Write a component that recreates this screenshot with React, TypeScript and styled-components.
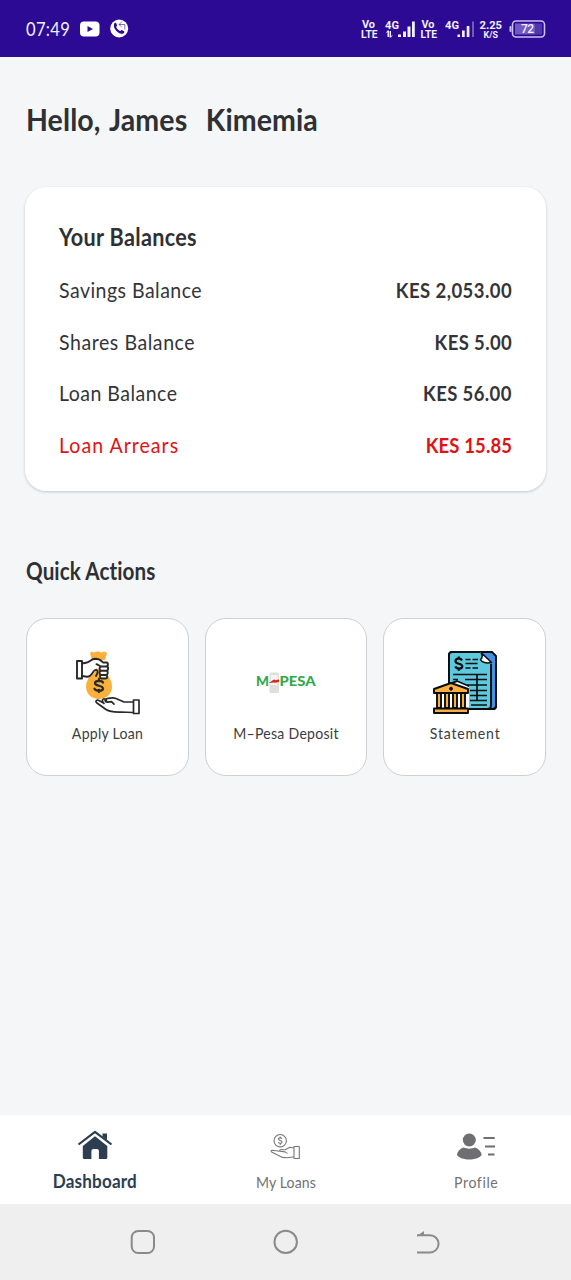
import React from "react";
import styled, { createGlobalStyle } from "styled-components";

const Global = createGlobalStyle`
  * { box-sizing: border-box; }
  body { margin: 0; background: #f4f6f8; font-family: Lato, "Open Sans", sans-serif; color: #2f3033; }
  svg { display: block; flex: none; }
`;

const Screen = styled.div`
  width: 571px;
  height: 1280px;
  display: flex;
  flex-direction: column;
  background: #f4f6f8;
  overflow: hidden;
`;

const StatusBar = styled.header`
  height: 57px;
  flex: none;
  display: flex;
  align-items: center;
  justify-content: space-between;
  padding: 0 23px 0 26px;
  background: #2c0a94;
  color: #f3f0fc;
`;

const StatusGroup = styled.div<{ $gap: number }>`
  display: flex;
  align-items: center;
  gap: ${(p) => p.$gap}px;
`;

const Main = styled.main`
  flex: 1;
  padding: 40px 25px 0;
`;

type TextProps = { $size: number; $weight?: number; $track?: number; $narrow?: number; $from?: string };

const Text = styled.span<TextProps>`
  display: block;
  font-size: ${(p) => p.$size}px;
  font-weight: ${(p) => p.$weight ?? 400};
  font-variant-ligatures: none;
  letter-spacing: ${(p) => p.$track ?? 0}px;
  transform: scaleX(${(p) => p.$narrow ?? 1});
  transform-origin: ${(p) => p.$from ?? "left"} center;
  white-space: pre;
`;

const Clock = styled(Text)`
  width: 44px;
`;

const Greeting = styled(Text).attrs({ as: "h1" })`
  margin: 0 0 0 1px;
  line-height: 44px;
  word-spacing: 2.4px;
`;

const BalanceCard = styled.section`
  margin-top: 46px;
  height: 304px;
  padding: 34px 34px 0;
  border-radius: 21px;
  background: #fff;
  box-shadow: 0 1px 3px rgba(0, 0, 0, 0.2);
`;

const CardTitle = styled(Text).attrs({ as: "h2" })`
  margin: 0 0 11px;
  line-height: 32px;
`;

const BalanceRow = styled.div<{ $alert?: boolean }>`
  display: flex;
  justify-content: space-between;
  align-items: center;
  height: 51.6px;
  color: ${(p) => (p.$alert ? "#e01212" : "#333438")};
`;

const SectionTitle = styled(Text).attrs({ as: "h2" })`
  margin: 64px 0 31px 1px;
  line-height: 32px;
`;

const Tiles = styled.div`
  display: grid;
  grid-template-columns: repeat(3, 1fr);
  gap: 16px;
  padding: 0 0.5px 0 1px;
`;

const Tile = styled.button`
  height: 158px;
  display: flex;
  flex-direction: column;
  align-items: center;
  padding: 32px 0 0 1px;
  border: 1px solid #cdd0d4;
  border-radius: 21px;
  background: #fff;
  color: #3c3d41;
  font-family: inherit;
`;

const TileLabel = styled(Text)`
  margin-top: 7px;
  line-height: 22px;
`;

const TabBar = styled.nav`
  height: 89px;
  flex: none;
  display: grid;
  grid-template-columns: repeat(3, 1fr);
  background: #fff;
`;

const Tab = styled.div<{ $active?: boolean }>`
  display: flex;
  flex-direction: column;
  align-items: center;
  padding-top: 14px;
  color: ${(p) => (p.$active ? "#2c3e50" : "#717173")};
`;

const TabLabel = styled(Text)`
  margin-top: ${(p) => (p.$weight === 700 ? 6 : 7)}px;
  line-height: 28px;
`;

const SystemNav = styled.footer`
  height: 76px;
  flex: none;
  display: flex;
  justify-content: space-between;
  align-items: center;
  padding: 0 130px;
  background: #efefef;
`;

const balances = [
  { label: "Savings Balance", amount: "KES 2,053.00", labelTrack: 0.5, amountTrack: 0.5 },
  { label: "Shares Balance", amount: "KES 5.00", labelTrack: 0.6, amountTrack: 0.45 },
  { label: "Loan Balance", amount: "KES 56.00", labelTrack: 0.5, amountTrack: 0.45 },
  { label: "Loan Arrears", amount: "KES 15.85", labelTrack: 1.1, amountTrack: 0.15, alert: true },
];

const StatusIcons = () => (
  <svg width="188" height="24" viewBox="0 0 188 24" fill="#f3f0fc" fontFamily="Roboto, sans-serif" fontWeight="700">
    <text x="2" y="10.500" fontSize="10" textLength="13" lengthAdjust="spacingAndGlyphs">Vo</text>
    <text x="1" y="20.500" fontSize="10.500" textLength="16.500" lengthAdjust="spacingAndGlyphs">LTE</text>
    <text x="25" y="12" fontSize="11" textLength="14" lengthAdjust="spacingAndGlyphs">4G</text>
    <path d="M27.500 20v-5l-2 1.600 2-3H29V20zM31 14v5l2-1.600-2 3h-1.400V14z" />
    <path d="M38 17.500h3V20h-3zM43 14.500h3V20h-3zM47.500 9.500h3V20h-3zM52 4.500h2.800V20H52z" />
    <text x="61.500" y="10.500" fontSize="10" textLength="13" lengthAdjust="spacingAndGlyphs">Vo</text>
    <text x="60.500" y="20.500" fontSize="10.500" textLength="16.500" lengthAdjust="spacingAndGlyphs">LTE</text>
    <text x="85" y="12" fontSize="11" textLength="14" lengthAdjust="spacingAndGlyphs">4G</text>
    <path d="M97.500 17.500h2.500V20h-2.500zM102 13.500h2.700V20H102zM106.700 9h2.700v11h-2.700z" />
    <path d="M112 4.500h2V20h-2z" opacity=".35" />
    <text x="119.500" y="12" fontSize="11" textLength="22.500" lengthAdjust="spacingAndGlyphs">2.25</text>
    <text x="123.500" y="20.500" fontSize="9" textLength="14.500" lengthAdjust="spacingAndGlyphs">K/S</text>
    <rect x="152.500" y="4" width="32" height="16" rx="3.500" fill="none" stroke="#c9c0ee" strokeWidth="1.600" />
    <rect x="155" y="6.500" width="20.500" height="11" fill="#7059c2" />
    <rect x="175.500" y="6.500" width="6.500" height="11" fill="#5036ab" />
    <rect x="149.500" y="9" width="2" height="6" rx="1" fill="#c9c0ee" />
    <text x="161" y="16.300" fontSize="12" fontWeight="500" textLength="13">72</text>
  </svg>
);

const YouTubeIcon = () => (
  <svg width="20" height="16" viewBox="0 0 20 16">
    <rect x="0" y="0.500" width="19.500" height="15" rx="4" fill="#fff" />
    <path d="M7.500 5v6l5.500-3z" fill="#2c0a94" />
  </svg>
);

const CallIcon = () => (
  <svg width="19" height="19" viewBox="0 0 19 19">
    <circle cx="9.200" cy="9.500" r="9" fill="#fff" />
    <path d="M4 5c.8-1.500 2-1.500 2.500-.3l.6 1.700-.9 1.300c.6 2 2 3.500 4 4.400l1.300-1 2.200.9c1 .6.800 1.500-.2 2.200C9.700 16.500 2.800 10.500 4 5z" fill="#2c0a94" />
    <path d="M9 5.500h5.800v5M9 5.500 12 2.500M9 5.500l2.500 2.300" fill="none" stroke="#2c0a94" strokeWidth=".8" opacity=".75" />
  </svg>
);

const LoanIcon = () => (
  <svg width="64" height="64" viewBox="0 0 64 64" fill="none" stroke="#29292b" strokeWidth="1.900" strokeLinejoin="round" strokeLinecap="round">
    <path d="M14 2c1.500-2 3.500-1.500 4 0 1.500-2 6-2 7.500 0 1-1.600 4-1.600 5.500 0l-2 7H16z" fill="#fbb03b" stroke="none" />
    <path d="M16 20c0-3 3-5 7-5s6 2 6 5c1 3 7 8 7 15.500C36 43 30.500 48 23 48S10 43 10 35.500C10 29 15.500 24 16 20z" fill="#fbb03b" stroke="none" />
    <path d="M6 12.500l5-1c3-.3 4.500-3.500 8-3.700 3-.2 6 1.500 8 3.500l5 .5v15h-7.500l-.5-8-4-1.500c-1 4.500-3.500 8-7.500 8L6 25.500z" fill="#fff" stroke="none" />
    <rect x="1" y="10" width="5" height="17.500" />
    <path d="M6 12.500l4-.8c4-.5 5-3.800 9-3.900 3.500 0 6 1.400 8 3.700h3.500c2 .3 2 4-.5 4H25l-4.500-2.300M6 25l5 .8c3 .1 5-2.800 6.500-5.300.8-1.500 2.500-2 3.500-1.200 1.500 1 .5 3-1 5.700M30.500 15.500c2.500.5 2 4.300-.5 4.300h-5M30.500 19.800c2 .5 1.500 4.200-.5 4.200h-5M30 24c2 .8 1.500 3.500-.5 3.500h-4c-2-.5-2-3-.5-3.500-2-.6-2-3.800 0-4.200-2-.6-2-3.500 0-4.300" />
    <path d="M27 31.500c-1-2-7.500-2.500-8 .5-.3 3.500 8 2 8 5.500 0 3-7 3-8.500.3M23 28v2M23 39v2" strokeWidth="2.300" />
    <path d="M57 51h-9l-8-3.500c-3-1.200-6-.5-9 .2-3 .6-2.300 3.600.5 3.500l4-.5 2.500 2.500M31 51c-1-3-3-3.500-3.500-3-2 .5-1 3 .5 4.500M27.500 52l-4.500-2.500c-2-.8-4.500.5-2 2.500l9 6.500c4 2.500 10 2.700 15 2.500l12 .5" strokeWidth="1.700" />
    <rect x="57.500" y="49" width="5.500" height="13.500" strokeWidth="1.700" />
  </svg>
);

const MpesaIcon = () => (
  <svg width="64" height="64" viewBox="0 0 64 64" fontFamily="Lato, sans-serif" fontWeight="900" fontSize="13">
    <rect x="15.500" y="21.500" width="9.500" height="20.500" rx="1.500" fill="#dededa" />
    <rect x="16.700" y="24" width="7" height="10" fill="#f3f3f0" />
    <text x="2" y="34.500" fill="#31a94b" textLength="13" lengthAdjust="spacingAndGlyphs">M</text>
    <path d="M15 31.500c2-.5 3.500-2.500 5.500-3l.8.800 3.700-.8v2.500l-4 .8-1.500-.4-4 .6z" fill="#d9232a" />
    <text x="25.500" y="34.500" fill="#31a94b" textLength="36" lengthAdjust="spacingAndGlyphs">PESA</text>
  </svg>
);

const StatementIcon = () => (
  <svg width="64" height="64" viewBox="0 0 64 64" stroke="#0b0c10" strokeWidth="1.900" strokeLinejoin="round">
    <path d="M19 1h40l4 4v50a3 3 0 0 1-3 3H38V36l-14-6-8 3V4a3 3 0 0 1 3-3z" fill="#4591e3" />
    <path d="M19 1h29l9.500 10v44q0 3-3 3H36V34l-12-5-8 3V4a3 3 0 0 1 3-3z" fill="#5cc9dc" stroke="none" />
    <path d="M47 1H19a3 3 0 0 0-3 3v29M36 58h18.500q3.500 0 3.500-4V13M54 58h6q3 0 3-3V13" fill="none" />
    <path d="M48 1.500c2 4 1 6-.5 7 1 3 6 4 11 3z" fill="#fff" strokeWidth="1.500" />
    <path d="M29 9.500c-1-2.500-6.500-2.500-6.500.7 0 3.300 6.800 1.700 6.800 5 0 3-6 3-7 .2M25.800 5.500v2M25.800 17.500v2.300" fill="none" strokeWidth="2.200" />
    <path d="M32.500 8.500h5M39.500 8.500H45M32.500 12.500h12M32.500 17h5M39.500 17H45M20 23.500h34M20 28.500h5M32 28.500h22M34 34h20M37 39.500h17M37 44.500h17M37 49.500h17M38 54h16M44 23.500v26" fill="none" strokeWidth="1.700" />
    <path d="M3 42h30v15H3z" fill="#fff" stroke="none" />
    <path d="M1 38l17-6 17 6v4H1z" fill="#f9af3e" />
    <path d="M4 42h4v15H4zM12 42h4v15h-4zM20 42h4v15h-4zM28 42h4v15h-4z" fill="#f9af3e" />
    <path d="M1 57.500h34v4.500H1z" fill="#f9af3e" />
    <circle cx="18" cy="37.700" r="1.500" fill="#0b0c10" strokeWidth="1" />
  </svg>
);

const HomeIcon = () => (
  <svg width="36" height="32" viewBox="0 0 36 32">
    <path d="M1.500 15.500 18 2.800l16.500 12.700" fill="none" stroke="#2c3e50" strokeWidth="2.200" strokeLinejoin="round" />
    <path d="M25.500 4.500H30V11l-4.500-3.500zM18 7.300 30.300 17v11.500q0 1.500-1.500 1.500h-6.900v-8q0-2-2-2h-3.500q-2 0-2 2v8H7.300q-1.500 0-1.500-1.500V17z" fill="#2c3e50" />
  </svg>
);

const LoansIcon = () => (
  <svg width="36" height="32" viewBox="0 0 36 32" fill="none" stroke="#777779" strokeWidth="1.100" strokeLinejoin="round">
    <circle cx="13.200" cy="11.700" r="6.200" />
    <path d="M15 9.800c-.6-1.300-3.500-1.300-3.500.3 0 1.800 3.600 1 3.600 3 0 1.700-3 1.700-3.800.2M13.200 7.500v1.400M13.200 14.600V16" />
    <path d="M27 19l-4-.7-5 2.500h-5v1.500l5 .6 2.500 1.500M13 22.300l-8-1.100c-1.500.2-1 1.500 0 2l10.500 5.200 5 .4 6.500-1" />
    <rect x="27" y="17.500" width="5.300" height="12" />
  </svg>
);

const ProfileIcon = () => (
  <svg width="40" height="32" viewBox="0 0 40 32" fill="#6f6f71">
    <circle cx="13.300" cy="11" r="6.500" />
    <path d="M.9 26c.5-3.500 3-6 6.300-7.500 4 1.500 8 1.500 12 0 3.500 1.500 6 4 6.500 7.500-2 3-7.500 4.500-12.500 4.500S3.200 29 .9 26z" />
    <path d="M27.500 8h11.200v1.900H27.500zM29 16.500h10v1.900H29zM32 24.500h6.500v1.900H32z" />
  </svg>
);

const SquareIcon = () => (
  <svg width="26" height="26" viewBox="0 0 26 26" fill="none" stroke="#8a8a8a" strokeWidth="2">
    <rect x="1.700" y="2" width="22.300" height="22" rx="6.500" />
  </svg>
);

const CircleIcon = () => (
  <svg width="26" height="26" viewBox="0 0 26 26" fill="none" stroke="#8a8a8a" strokeWidth="2">
    <circle cx="12.700" cy="12.900" r="11.200" />
  </svg>
);

const BackIcon = () => (
  <svg width="26" height="26" viewBox="0 0 26 26" fill="none" stroke="#8a8a8a" strokeWidth="2">
    <path d="M2 6.200h13a8.500 8.500 0 0 1 0 17.200H2" />
    <path d="M1.500 7.200 9 2v4.500z" fill="#8a8a8a" stroke="none" />
  </svg>
);

export default function App() {
  return (
    <Screen>
      <Global />
      <StatusBar>
        <StatusGroup $gap={10}>
          <Clock $size={19} $narrow={0.87} $track={0.4}>07:49</Clock>
          <YouTubeIcon />
          <CallIcon />
        </StatusGroup>
        <StatusIcons />
      </StatusBar>
      <Main>
        <Greeting $size={31} $weight={700} $track={0.1} $narrow={0.92}>{"Hello, James  Kimemia"}</Greeting>
        <BalanceCard>
          <CardTitle $size={24} $weight={700} $track={0.35} $narrow={0.9}>Your Balances</CardTitle>
          {balances.map((b) => (
            <BalanceRow key={b.label} $alert={b.alert}>
              <Text $size={21} $track={b.labelTrack} $narrow={0.93}>{b.label}</Text>
              <Text $size={21} $weight={700} $track={b.amountTrack} $narrow={0.88} $from="right">{b.amount}</Text>
            </BalanceRow>
          ))}
        </BalanceCard>
        <SectionTitle $size={24} $weight={700} $track={0.1} $narrow={0.86}>Quick Actions</SectionTitle>
        <Tiles>
          <Tile>
            <LoanIcon />
            <TileLabel $size={16} $track={0.3} $narrow={0.88} $from="center">Apply Loan</TileLabel>
          </Tile>
          <Tile>
            <MpesaIcon />
            <TileLabel $size={16} $track={0.3} $narrow={0.88} $from="center">M–Pesa Deposit</TileLabel>
          </Tile>
          <Tile>
            <StatementIcon />
            <TileLabel $size={16} $track={0.9} $narrow={0.88} $from="center">Statement</TileLabel>
          </Tile>
        </Tiles>
      </Main>
      <TabBar>
        <Tab $active>
          <HomeIcon />
          <TabLabel $size={19} $weight={700} $track={0.2} $narrow={0.9} $from="center">Dashboard</TabLabel>
        </Tab>
        <Tab>
          <LoansIcon />
          <TabLabel $size={16} $track={0.1} $narrow={0.88} $from="center">My Loans</TabLabel>
        </Tab>
        <Tab>
          <ProfileIcon />
          <TabLabel $size={16} $track={0.7} $narrow={0.88} $from="center">Profile</TabLabel>
        </Tab>
      </TabBar>
      <SystemNav>
        <SquareIcon />
        <CircleIcon />
        <BackIcon />
      </SystemNav>
    </Screen>
  );
}
